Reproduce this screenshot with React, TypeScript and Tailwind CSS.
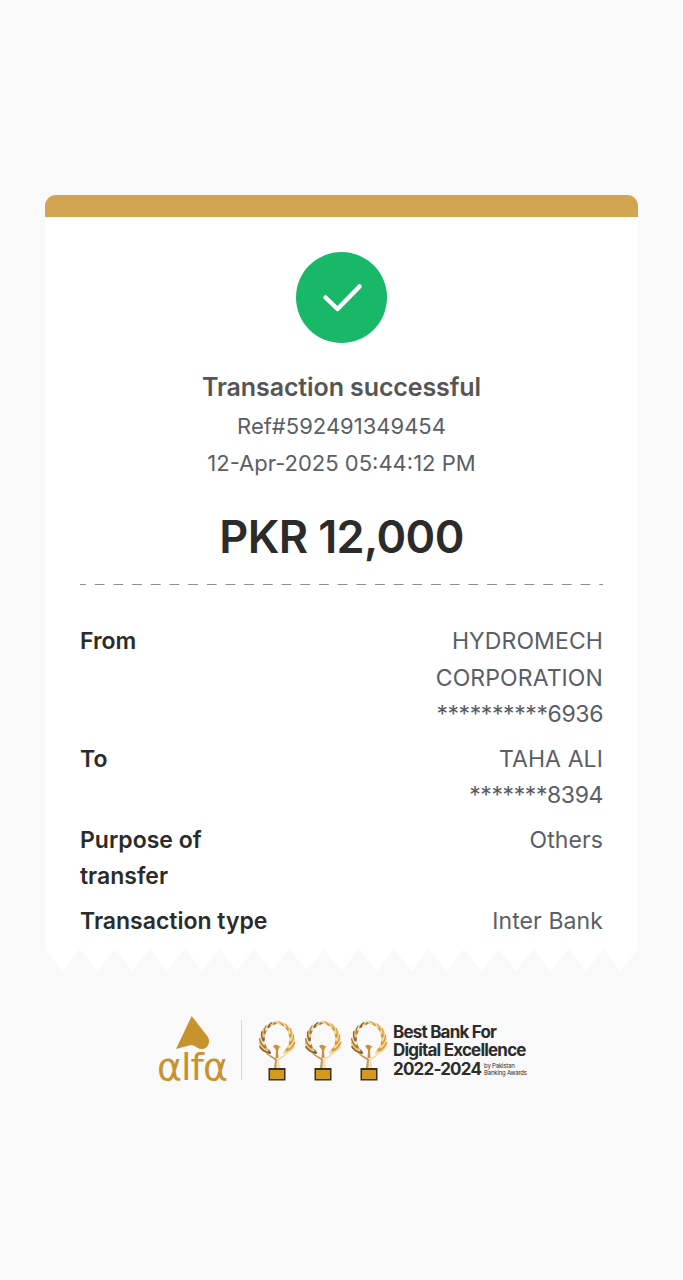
const details = [
  { label: ["From"], value: ["HYDROMECH", "CORPORATION", "**********6936"] },
  { label: ["To"], value: ["TAHA ALI", "*******8394"] },
  { label: ["Purpose of", "transfer"], value: ["Others"] },
  { label: ["Transaction type"], value: ["Inter Bank"] },
];

// leaves of one half of the wreath, from the stem up to the open top
const leaves = Array.from({ length: 11 }, (_, i) => {
  const deg = 215 - i * 12;
  const a = deg * (Math.PI / 180);
  const size = 7 - i * 0.4;
  return {
    x: 19 + 14.500 * Math.cos(a),
    y: 19 - 17 * Math.sin(a),
    rot: 180 - deg - 22,
    size,
    fill: ["#8a6230", "#e8c684", "#b07c34", "#f5e6c2"][i % 4],
  };
});

// 17 teeth along the torn bottom edge of the receipt
function TornEdge() {
  const teeth = Array.from({ length: 17 }, (_, i) => `L${i * 34.9 + 17.45} 22 L${(i + 1) * 34.9} 0`).join(" ");
  return (
    <svg viewBox="0 0 593 22" className="block h-[22px] w-full">
      <path d={`M0 0 ${teeth} Z`} fill="#ffffff" />
    </svg>
  );
}

function Trophy() {
  return (
    <svg viewBox="0 0 38 61" className="mt-[4px] h-[61px] w-[38px]">
      {leaves.map((l, i) => (
        <g key={i}>
          <ellipse cx={l.x} cy={l.y} rx={l.size * 0.32} ry={l.size} fill={l.fill} transform={`rotate(${l.rot} ${l.x} ${l.y})`} />
          <ellipse cx={38 - l.x} cy={l.y} rx={l.size * 0.32} ry={l.size} fill={i % 2 ? "#d39a3c" : "#f3d9a0"} transform={`rotate(${-l.rot} ${38 - l.x} ${l.y})`} />
        </g>
      ))}
      {/* branches meeting in the stem */}
      <path d="M7 31c3 4 7 6 10 8l-1 8h2.500l.5-9z" fill="#c4985a" />
      <path d="M31 31c-3 4-7 6-10 8l1 8h-2.500l-.5-9z" fill="#f2dcae" />
      {/* bird on top of the stem */}
      <path d="M17.500 37l.5-8-3-4 3-1.500 3 1.500 2 1-2 .5-1 3.500 .5 7z" fill="#c8923c" />
      <rect x="10.500" y="47" width="17" height="12.500" fill="#3a3220" />
      <rect x="12" y="49" width="14" height="9" fill="#d49a1e" />
    </svg>
  );
}

export default function App() {
  return (
    <main className="min-h-screen bg-[#f9f9f9] px-[45px] pt-[195px] font-['Inter',sans-serif]">
      {/* Receipt */}
      <div className="w-[593px]">
        <div className="h-[22px] rounded-t-[11px] bg-[#d2a552]" />
        <div className="flex flex-col bg-white px-[35px] pt-[35px] pb-[10px]">
          <div className="flex h-[91px] w-[91px] items-center justify-center self-center rounded-full bg-[#19b868]">
            <svg viewBox="0 0 91 91" className="h-[91px] w-[91px]" fill="none">
              <path d="M29.5 45.5l12 11.5 22-22.500" stroke="#ffffff" strokeWidth="4.500" strokeLinecap="round" strokeLinejoin="round" />
            </svg>
          </div>

          <h1 className="mt-[26px] text-center text-[25px] leading-[37px] font-semibold tracking-[-0.1px] text-[#555555]">
            Transaction successful
          </h1>
          <p className="mt-[2px] text-center text-[22px] leading-[36.600px] text-[#5a5e66]">Ref#592491349454</p>
          <p className="text-center text-[22px] leading-[36.600px] text-[#5a5e66]">12-Apr-2025 05:44:12 PM</p>

          <p className="mt-[28px] text-center text-[45px] leading-[56px] font-semibold tracking-[-0.6px] text-[#2b2b2b]">PKR 12,000</p>

          <div className="mt-[19px] h-px w-full bg-[linear-gradient(to_right,#8f8f8f_50%,transparent_50%)] bg-[length:18.700px_1px] bg-[position:-4px_0]" />

          <div className="mt-[38px] flex flex-col gap-[8px]">
            {details.map((row) => (
              <div key={row.label[0]} className="flex justify-between text-[23px] leading-[36.500px]">
                <div className="font-semibold text-[#2b2b2b]">
                  {row.label.map((line) => (
                    <div key={line}>{line}</div>
                  ))}
                </div>
                <div className="text-right text-[#5a5e66]">
                  {row.value.map((line) => (
                    <div key={line} className={line.includes("*") ? "tracking-[-0.4px]" : "tracking-[0.1px]"}>
                      {line}
                    </div>
                  ))}
                </div>
              </div>
            ))}
          </div>
        </div>
        <TornEdge />
      </div>

      {/* Awards footer */}
      <div className="mt-[44px] ml-[113px] flex items-center">
        <div className="flex w-[68px] flex-col items-center">
          <svg viewBox="0 0 36 36" className="h-[36px] w-[36px]">
            <path d="M17.700 1L34 22C37 28 33 34.500 27 34C23 33.500 21 30 17 30L2 34Z" fill="#c8922f" />
          </svg>
          <span className="mt-[-1px] font-['DejaVu_Sans',sans-serif] text-[38px] leading-[34px] font-normal tracking-[-1px] whitespace-nowrap text-[#c8922f]">αlfα</span>
        </div>
        <div className="mr-[16px] ml-[15px] h-[60px] w-px bg-[#d9d9d9]" />
        <div className="flex gap-[8px]">
          <Trophy />
          <Trophy />
          <Trophy />
        </div>
        <div className="mt-[2px] ml-[5px] text-[17px] leading-[18.500px] font-bold tracking-[-0.8px] text-[#2c2c2c]">
          <div>Best Bank For</div>
          <div>Digital Excellence</div>
          <div className="flex items-center">
            2022-2024
            <span className="ml-[3px] text-[6px] leading-[7px] font-normal tracking-[-0.2px]">
              by Pakistan
              <br />
              Banking Awards
            </span>
          </div>
        </div>
      </div>
    </main>
  );
}
